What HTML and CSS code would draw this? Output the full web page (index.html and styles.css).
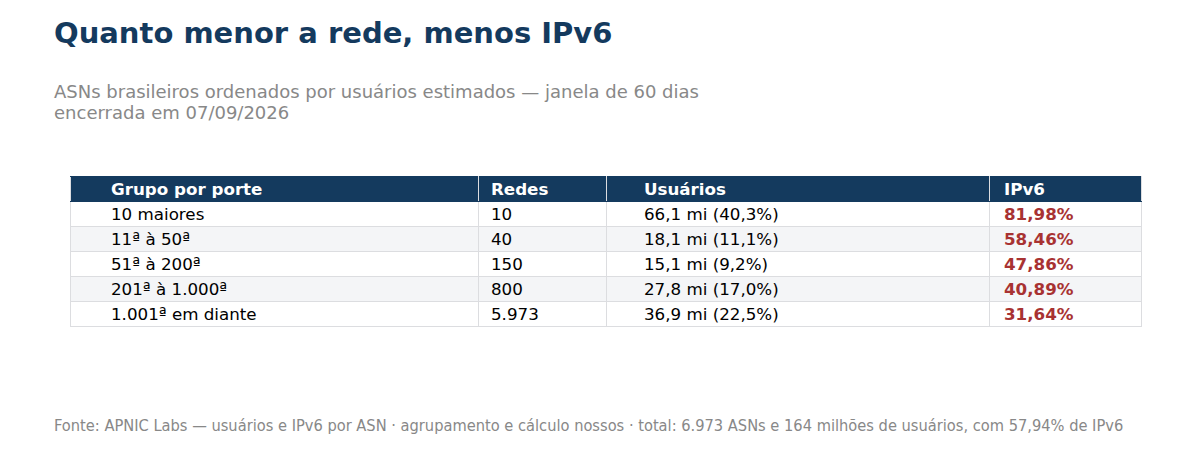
FILE: index.html
```html
<!DOCTYPE html>
<html lang="pt-BR">
<head>
<meta charset="utf-8">
<link rel="stylesheet" href="styles.css">
</head>
<body>
<main class="page">
  <h1 class="title">Quanto menor a rede, menos IPv6</h1>
  <p class="subtitle">ASNs brasileiros ordenados por usuários estimados — janela de 60 dias encerrada em 07/09/2026</p>
  <div class="table-wrap">
    <table class="data">
      <thead>
        <tr>
          <th class="c1">Grupo por porte</th>
          <th class="c2">Redes</th>
          <th class="c3">Usuários</th>
          <th class="c4">IPv6</th>
        </tr>
      </thead>
      <tbody>
        <tr><td class="c1">10 maiores</td><td class="c2">10</td><td class="c3">66,1 mi (40,3%)</td><td class="c4 v6">81,98%</td></tr>
        <tr><td class="c1">11ª à 50ª</td><td class="c2">40</td><td class="c3">18,1 mi (11,1%)</td><td class="c4 v6">58,46%</td></tr>
        <tr><td class="c1">51ª à 200ª</td><td class="c2">150</td><td class="c3">15,1 mi (9,2%)</td><td class="c4 v6">47,86%</td></tr>
        <tr><td class="c1">201ª à 1.000ª</td><td class="c2">800</td><td class="c3">27,8 mi (17,0%)</td><td class="c4 v6">40,89%</td></tr>
        <tr><td class="c1">1.001ª em diante</td><td class="c2">5.973</td><td class="c3">36,9 mi (22,5%)</td><td class="c4 v6">31,64%</td></tr>
      </tbody>
    </table>
  </div>
  <p class="source">Fonte: APNIC Labs — usuários e IPv6 por ASN · agrupamento e cálculo nossos · total: 6.973 ASNs e 164 milhões de usuários, com 57,94% de IPv6</p>
</main>
</body>
</html>
```

FILE: styles.css
```css
html, body {
  margin: 0;
  padding: 0;
  background: #ffffff;
}

body {
  font-family: "DejaVu Sans", "Liberation Sans", sans-serif;
}

.page {
  width: 1200px;
  height: 450px;
  box-sizing: border-box;
  padding: 13px 54px 0 54px;
  display: flex;
  flex-direction: column;
}

.title {
  margin: 0;
  font-size: 29px;
  line-height: 40px;
  font-weight: bold;
  color: #143a5e;
}

.subtitle {
  margin: 28px 0 0 0;
  width: 700px;
  font-size: 18px;
  line-height: 21px;
  color: #888888;
}

.table-wrap {
  margin: 53px 0 0 16px;
  width: 1072px;
}

.data {
  width: 100%;
  border-collapse: collapse;
  font-size: 16.7px;
  color: #000000;
}

.data th,
.data td {
  height: 24px;
  padding: 0;
  text-align: left;
  line-height: 24px;
  border: 1px solid #dcdde0;
  white-space: nowrap;
}

.data th {
  background: #143a5e;
  color: #ffffff;
  font-weight: bold;
  border-color: #143a5e #dcdde0;
}

.data tbody tr:nth-child(even) td {
  background: #f4f5f7;
}

.c1 { width: 367px; padding-left: 40px !important; }
.c2 { width: 115px; padding-left: 12px !important; }
.c3 { width: 345px; padding-left: 37px !important; }
.c4 { padding-left: 14px !important; }

.v6 {
  color: #a83232;
  font-weight: bold;
}

.source {
  margin: auto 0 14px 0;
  font-family: "DejaVu Sans Condensed", "DejaVu Sans", sans-serif;
  font-stretch: condensed;
  font-size: 16.3px;
  line-height: 20px;
  color: #888888;
  white-space: nowrap;
}
```
